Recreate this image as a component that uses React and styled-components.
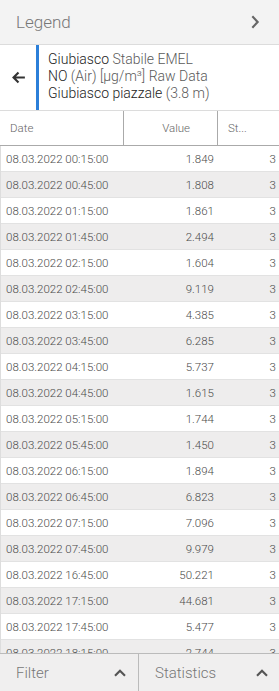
import React from 'react'
import styled, { createGlobalStyle } from 'styled-components'

const GlobalStyle = createGlobalStyle`
  html, body {
    margin: 0;
    padding: 0;
    background: #fff;
  }
  body {
    font-family: Roboto, "Liberation Sans", sans-serif;
    font-weight: 300;
  }
`

const rows = [
  ['08.03.2022 00:15:00', '1.849', '3'],
  ['08.03.2022 00:45:00', '1.808', '3'],
  ['08.03.2022 01:15:00', '1.861', '3'],
  ['08.03.2022 01:45:00', '2.494', '3'],
  ['08.03.2022 02:15:00', '1.604', '3'],
  ['08.03.2022 02:45:00', '9.119', '3'],
  ['08.03.2022 03:15:00', '4.385', '3'],
  ['08.03.2022 03:45:00', '6.285', '3'],
  ['08.03.2022 04:15:00', '5.737', '3'],
  ['08.03.2022 04:45:00', '1.615', '3'],
  ['08.03.2022 05:15:00', '1.744', '3'],
  ['08.03.2022 05:45:00', '1.450', '3'],
  ['08.03.2022 06:15:00', '1.894', '3'],
  ['08.03.2022 06:45:00', '6.823', '3'],
  ['08.03.2022 07:15:00', '7.096', '3'],
  ['08.03.2022 07:45:00', '9.979', '3'],
  ['08.03.2022 16:45:00', '50.221', '3'],
  ['08.03.2022 17:15:00', '44.681', '3'],
  ['08.03.2022 17:45:00', '5.477', '3'],
  ['08.03.2022 18:15:00', '2.744', '3'],
]

const Page = styled.div`
  width: 279px;
  height: 691px;
  display: flex;
  flex-direction: column;
  overflow: hidden;
  background: #fff;
`

const LegendBar = styled.div`
  height: 44px;
  flex: none;
  display: flex;
  align-items: center;
  justify-content: space-between;
  padding: 0 16px 0 16px;
  background: #f3f3f3;
  border-bottom: 1px solid #dcdcdc;
  color: #777;
  font-size: 17px;
`

const Info = styled.div`
  flex: none;
  display: flex;
  height: 65px;
  border-bottom: 1px solid #dcdcdc;
`

const Back = styled.div`
  width: 36px;
  display: flex;
  align-items: center;
  justify-content: center;
  color: #333;
`

const InfoText = styled.div`
  flex: 1;
  border-left: 3px solid #2b7fd9;
  padding: 6px 0 0 9px;
  font-size: 14px;
  line-height: 17px;
  color: #5a5a5a;
`

const Strong = styled.span`
  color: #222;
`

const Grid = styled.div`
  display: grid;
  grid-template-columns: 124px 94px 61px;
`

const Head = styled(Grid)`
  flex: none;
  height: 34px;
  border-bottom: 1px solid #aaa;
`

const HeadCell = styled.div`
  display: flex;
  align-items: center;
  justify-content: ${p => (p.$right ? 'flex-end' : 'flex-start')};
  padding: ${p => (p.$right ? '0 27px 0 0' : '0 0 0 10px')};
  border-right: ${p => (p.$last ? 'none' : '1px solid #aaa')};
  font-size: 11.5px;
  color: #666;
`

const Body = styled.div`
  flex: 1;
  overflow: hidden;
  border-left: 1px solid #ddd;
`

const Row = styled(Grid)`
  height: 25px;
  border-bottom: 1px solid #e2e2e2;
  background: ${p => (p.$alt ? '#eeeded' : '#fff')};
  margin-left: -1px;
`

const Cell = styled.div`
  display: flex;
  align-items: center;
  justify-content: ${p => (p.$right ? 'flex-end' : 'flex-start')};
  padding: ${p => p.$pad};
  font-size: 11.5px;
  color: #4a4a4a;
  white-space: nowrap;
`

const Footer = styled.div`
  flex: none;
  height: 37px;
  display: grid;
  grid-template-columns: 139px 1fr;
  border-top: 1px solid #bbb;
  background: #f0efef;
`

const Tab = styled.div`
  display: flex;
  align-items: center;
  justify-content: space-between;
  padding: 0 ${p => (p.$first ? '10px' : '9px')} 0 16px;
  font-size: 15px;
  color: #777;
  border-right: ${p => (p.$first ? '1px solid #bbb' : 'none')};
`

const ChevronUp = () => (
  <svg width="16" height="16" viewBox="0 0 24 24" fill="none" stroke="#555" strokeWidth="3.2">
    <path d="M4.5 16l7.5-7.5 7.5 7.5" />
  </svg>
)

export default function App() {
  return (
    <Page>
      <GlobalStyle />
      <LegendBar>
        <span>Legend</span>
        <svg width="16" height="18" viewBox="0 0 24 27" fill="none" stroke="#666" strokeWidth="3.2">
          <path d="M8 5l8 8.5-8 8.5" />
        </svg>
      </LegendBar>
      <Info>
        <Back>
          <svg width="17" height="17" viewBox="0 0 24 24" fill="none" stroke="#333" strokeWidth="3">
            <path d="M21 12H5M12 5l-7 7 7 7" />
          </svg>
        </Back>
        <InfoText>
          <div><Strong>Giubiasco</Strong> Stabile EMEL</div>
          <div><Strong>NO</Strong> (Air) [µg/m³] Raw Data</div>
          <div><Strong>Giubiasco piazzale</Strong> (3.8 m)</div>
        </InfoText>
      </Info>
      <Head>
        <HeadCell>Date</HeadCell>
        <HeadCell $right>Value</HeadCell>
        <HeadCell $last>St...</HeadCell>
      </Head>
      <Body>
        {rows.map((r, i) => (
          <Row key={i} $alt={i % 2 === 1}>
            <Cell $pad="0 0 0 6px">{r[0]}</Cell>
            <Cell $right $pad="0 4px 0 0">{r[1]}</Cell>
            <Cell $right $pad="0 3px 0 0">{r[2]}</Cell>
          </Row>
        ))}
      </Body>
      <Footer>
        <Tab $first>
          <span>Filter</span>
          <ChevronUp />
        </Tab>
        <Tab>
          <span>Statistics</span>
          <ChevronUp />
        </Tab>
      </Footer>
    </Page>
  )
}
